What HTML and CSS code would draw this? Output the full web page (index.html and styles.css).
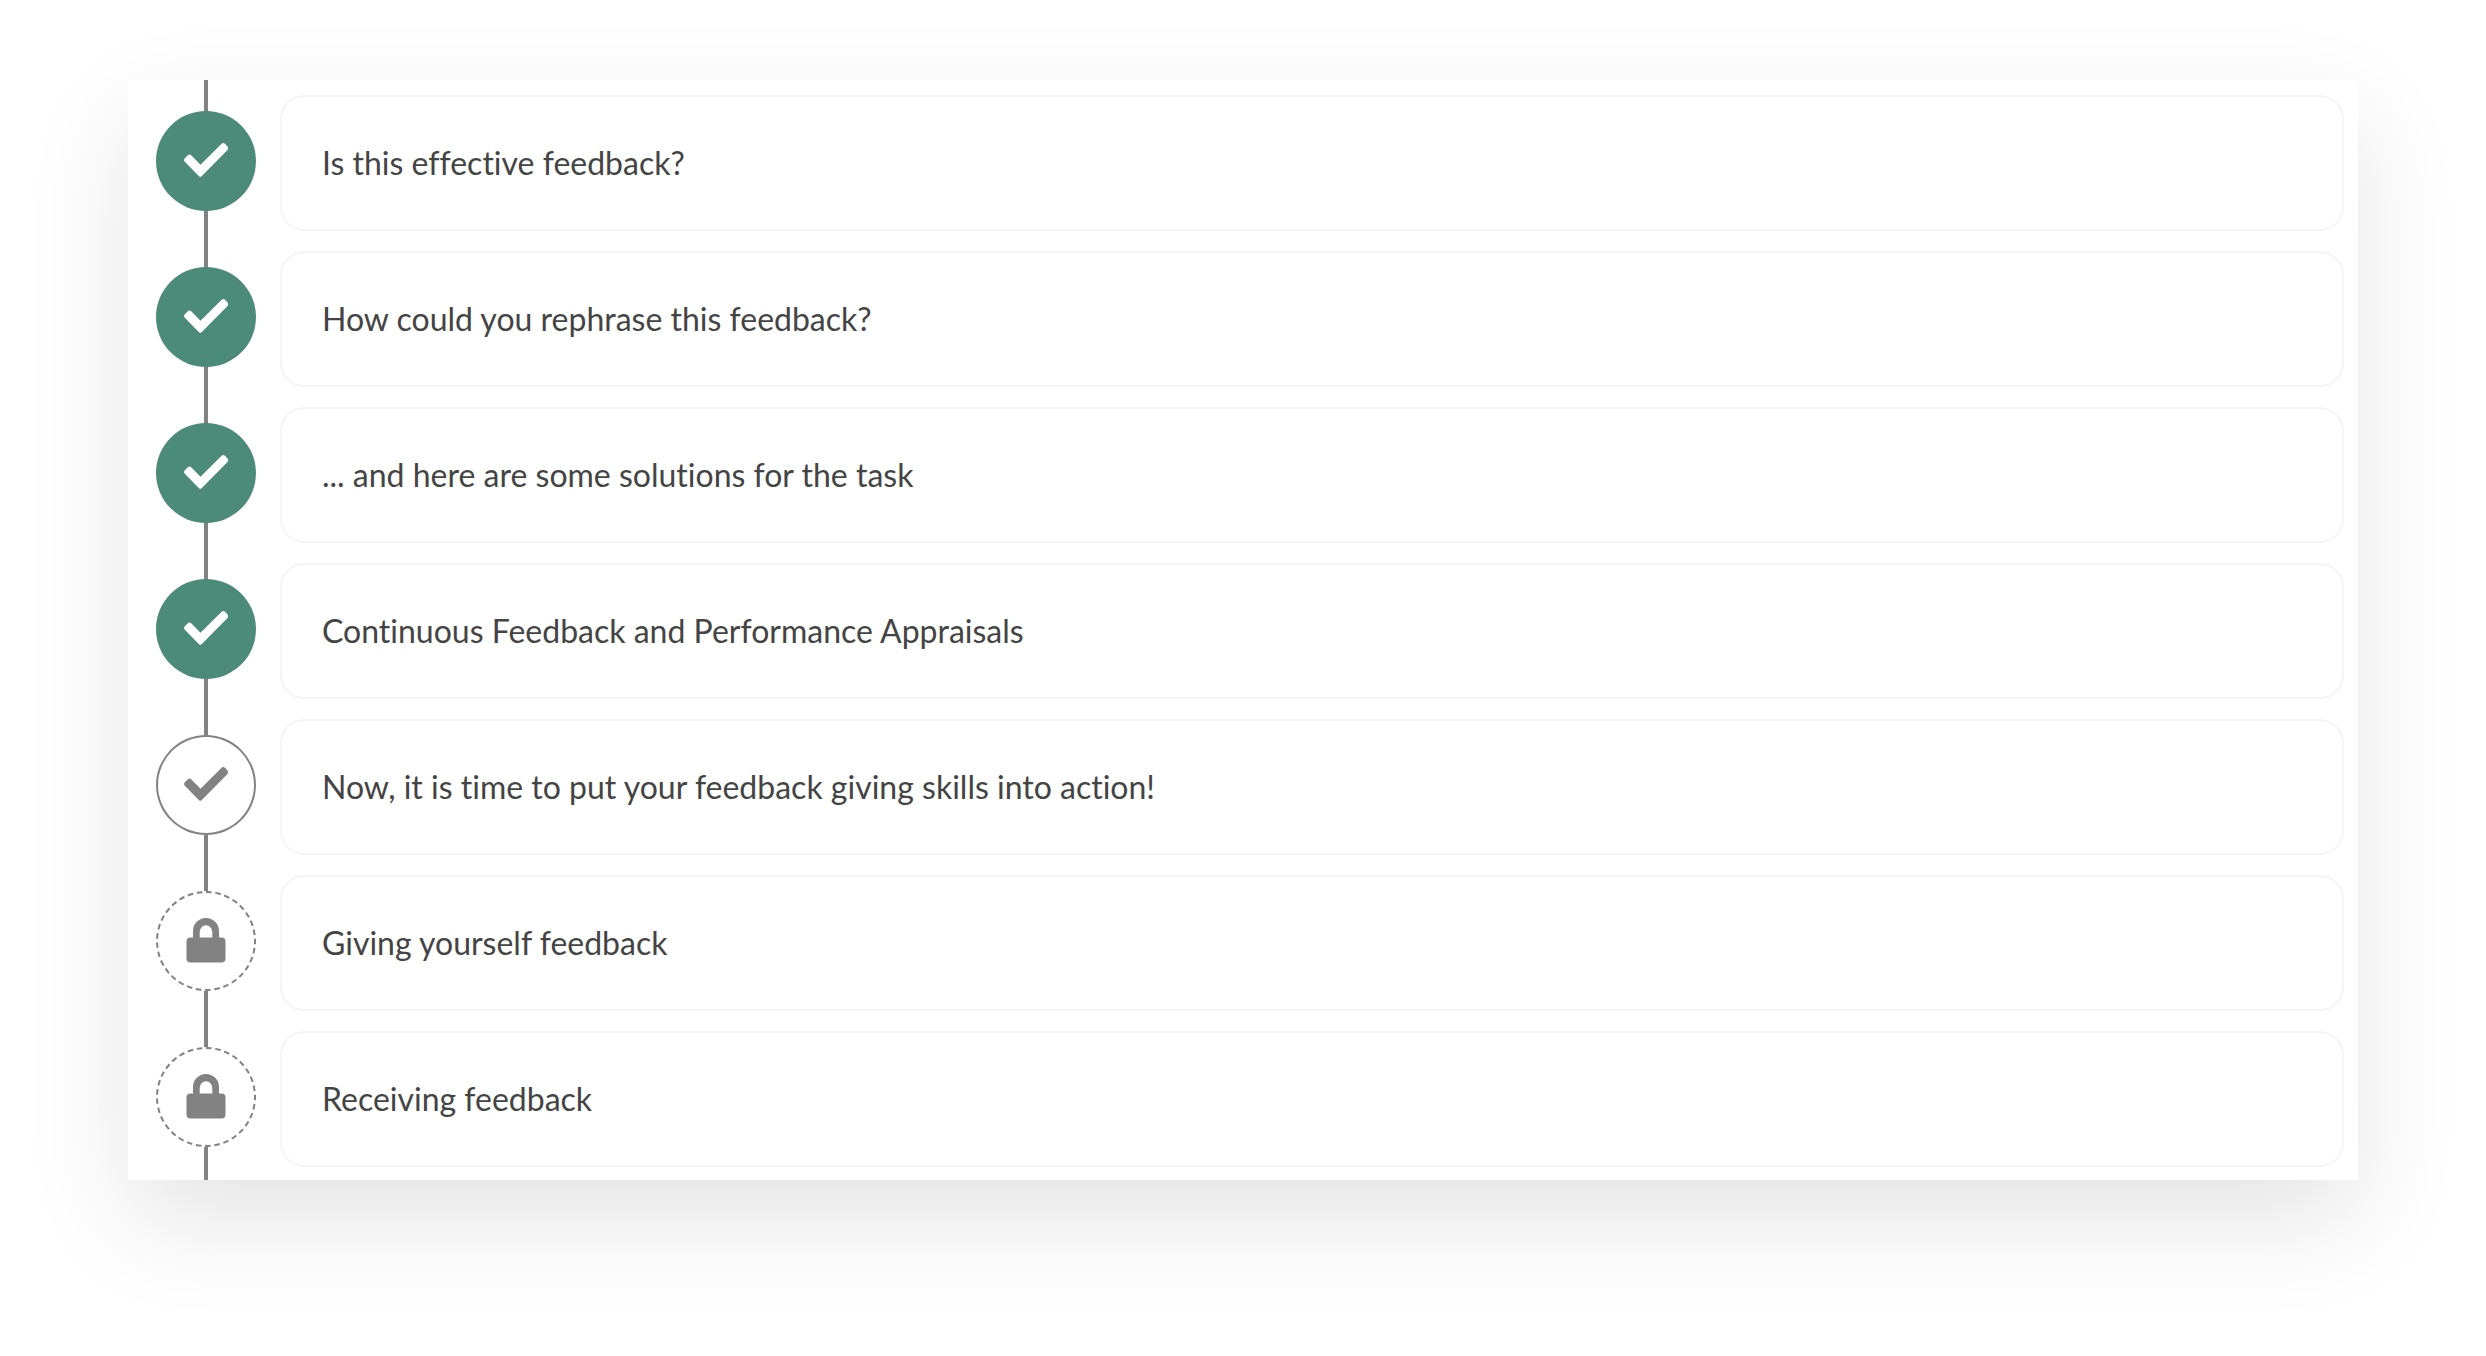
FILE: index.html
```html
<!DOCTYPE html>
<html lang="en">
<head>
  <meta charset="UTF-8" />
  <meta name="viewport" content="width=device-width, initial-scale=1" />
  <title>Giving feedback</title>
  <link rel="stylesheet" href="styles.css">
</head>
<body>
  <!-- Shared icons -->
  <svg class="sprite" aria-hidden="true">
    <symbol id="check" viewBox="0 0 100 100">
      <path d="M28.600 50.600Q27.200 49 28.600 47.400L31.800 44.200Q33.500 42.700 35.200 44.200L44.500 53.700L65.600 32.800Q67.400 31.400 69 32.800L71.500 35.500Q72.900 37.300 71.500 38.900L45.600 65.200Q44.300 66.400 43 65.200Z" />
    </symbol>
    <symbol id="lock" viewBox="0 0 100 100">
      <path fill-rule="evenodd" d="M37 48V40a13 13 0 0 1 26 0V48ZM43.700 48H56.300V41a6.300 6.700 0 0 0 -12.600 0Z" />
      <rect x="30.500" y="46.500" width="39" height="25" rx="4" />
    </symbol>
  </svg>

  <main class="panel">
    <ol class="steps">
      <li class="step">
        <span class="status done"><svg><use href="#check" /></svg></span>
        <a class="card" href="#">Is this effective feedback?</a>
      </li>
      <li class="step">
        <span class="status done"><svg><use href="#check" /></svg></span>
        <a class="card" href="#">How could you rephrase this feedback?</a>
      </li>
      <li class="step">
        <span class="status done"><svg><use href="#check" /></svg></span>
        <a class="card" href="#">... and here are some solutions for the task</a>
      </li>
      <li class="step">
        <span class="status done"><svg><use href="#check" /></svg></span>
        <a class="card" href="#">Continuous Feedback and Performance Appraisals</a>
      </li>
      <li class="step">
        <span class="status current"><svg><use href="#check" /></svg></span>
        <a class="card" href="#">Now, it is time to put your feedback giving skills into action!</a>
      </li>
      <li class="step">
        <span class="status locked">
          <svg viewBox="0 0 100 100">
            <circle class="ring" cx="50" cy="50" r="49" pathLength="330" transform="rotate(-90 50 50)" />
            <use href="#lock" />
          </svg>
        </span>
        <a class="card" href="#">Giving yourself feedback</a>
      </li>
      <li class="step">
        <span class="status locked">
          <svg viewBox="0 0 100 100">
            <circle class="ring" cx="50" cy="50" r="49" pathLength="330" transform="rotate(-90 50 50)" />
            <use href="#lock" />
          </svg>
        </span>
        <a class="card" href="#">Receiving feedback</a>
      </li>
    </ol>
  </main>
</body>
</html>
```
FILE: styles.css
```css
body {
  box-sizing: border-box;
  min-height: 100vh;
  margin: 0;
  padding: 80px 128px;
  font-family: Lato, sans-serif;
  font-size: 32px;
  line-height: 40px;
  font-variant-ligatures: no-common-ligatures;
  color: #444;
  background: #fff;
}
.sprite {
  display: none;
}
.panel {
  background: #fff;
  box-shadow: 0 40px 100px rgba(0, 0, 0, 0.11);
}
/* The grey line behind the status circles */
.steps {
  display: flex;
  flex-direction: column;
  gap: 20px;
  margin: 0;
  padding: 15px 14px 13px 28px;
  list-style: none;
  background: linear-gradient(#828282, #828282) 76px 0 / 4px 100% no-repeat;
}
.step {
  display: flex;
  align-items: flex-start;
  gap: 24px;
}
.status {
  box-sizing: border-box;
  flex: none;
  width: 100px;
  height: 100px;
  margin-top: 16px;
  border-radius: 50%;
  background: #fff;
  color: #828282;
}
.status svg {
  display: block;
  width: 100px;
  height: 100px;
  fill: currentColor;
}
.status.done {
  background: #4b8b77;
  color: #fff;
}
.status.current {
  box-shadow: inset 0 0 0 2px #828282;
}
.ring {
  fill: none;
  stroke: currentColor;
  stroke-width: 2;
  stroke-dasharray: 6 4;
}
.card {
  flex: 1;
  padding: 46px 40px;
  border: 2px solid #f5f5f5;
  border-radius: 24px;
  color: inherit;
  text-decoration: none;
}
.card:hover {
  border-color: #ddd;
}
```
